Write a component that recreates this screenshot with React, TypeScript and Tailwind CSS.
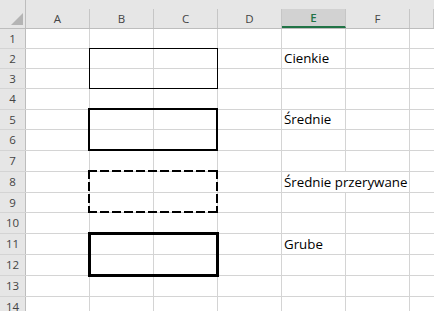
import type { ReactNode } from 'react'

const COLS = ['A', 'B', 'C', 'D', 'E', 'F', '']

// Row heights in px, bottom gridline included (the sheet is zoomed slightly, so they vary 20/21).
const ROWS: { h: string; label?: string }[] = [
  { h: 'h-[20px]' },
  { h: 'h-[20px]', label: 'Cienkie' },
  { h: 'h-[20px]' },
  { h: 'h-[21px]' },
  { h: 'h-[20px]', label: 'Średnie' },
  { h: 'h-[21px]' },
  { h: 'h-[21px]' },
  { h: 'h-[21px]', label: 'Średnie przerywane' },
  { h: 'h-[20px]' },
  { h: 'h-[21px]' },
  { h: 'h-[21px]', label: 'Grube' },
  { h: 'h-[21px]' },
  { h: 'h-[21px]' },
  { h: 'h-[21px]' },
]

const font = 'font-["Open_Sans",sans-serif]'

function ColHeader({ name, active }: { name: string; active?: boolean }) {
  return (
    <div className="h-[29px] flex-none border-b border-[#bdbdbd] bg-[#e6e6e6] pt-[9px]">
      <div
        className={`flex h-[19px] items-center justify-center border-r border-[#c6c6c6] text-[11.5px] ${
          active ? 'border-b-2 border-b-[#217346] bg-[#d2d2d2] font-semibold text-[#217346]' : 'text-[#444]'
        }`}
      >
        {name}
      </div>
    </div>
  )
}

function Cell({ children, wide }: { children?: ReactNode; wide?: boolean }) {
  return (
    <div
      className={`flex h-full flex-none items-end whitespace-nowrap border-r border-[#d4d4d4] pb-[1px] pl-[2px] text-[13.3px] leading-[18px] text-black ${
        wide ? 'w-[128px]' : 'w-[64px]'
      }`}
    >
      {children}
    </div>
  )
}

export default function App() {
  return (
    <div className={`relative h-[311px] w-[434px] overflow-hidden bg-white ${font}`}>
      {/* header row */}
      <div className="flex">
        <div className="flex h-[29px] w-[26px] flex-none items-start border-r border-b border-[#bdbdbd] bg-[#e6e6e6]">
          <svg width="25" height="28" className="block">
            <polygon points="23,13 23,25 11,25" fill="#b4b4b4" />
          </svg>
        </div>
        {COLS.map((c, i) => (
          <div key={i} className={i === COLS.length - 1 ? 'flex-1' : 'w-[64px] flex-none'}>
            <ColHeader name={c} active={c === 'E'} />
          </div>
        ))}
      </div>

      {/* sheet body */}
      {ROWS.map((r, i) => (
        <div key={i} className={`flex border-b border-[#d4d4d4] ${r.h}`}>
          <div className="flex h-full w-[26px] flex-none items-center justify-center border-r border-[#bdbdbd] bg-[#e6e6e6] text-[11.5px] text-[#444]">
            {i + 1}
          </div>
          <Cell />
          <Cell />
          <Cell />
          <Cell />
          {r.label === 'Średnie przerywane' ? (
            <Cell wide>{r.label}</Cell>
          ) : (
            <>
              <Cell>{r.label}</Cell>
              <Cell />
            </>
          )}
          <div className="flex-1" />
        </div>
      ))}

      {/* cell borders drawn on top of the gridlines */}
      <div className="pointer-events-none absolute inset-0 grid grid-cols-[26px_repeat(6,64px)_1fr] grid-rows-[29px_20px_20px_20px_21px_20px_21px_21px_21px_20px_21px_21px_21px_21px_21px]">
        <div className="col-start-3 col-span-2 row-start-3 row-span-2 -ml-[1px] -mt-[1px] border border-black" />
        <div className="col-start-3 col-span-2 row-start-6 row-span-2 -ml-[2px] -mt-[2px] border-2 border-black" />
        <div className="col-start-3 col-span-2 row-start-9 row-span-2 -ml-[2px] -mt-[2px]">
          <svg width="130" height="43" className="block">
            <g stroke="#000" strokeWidth="2" strokeDasharray="9 3" fill="none">
              <line x1="0" y1="1" x2="130" y2="1" />
              <line x1="0" y1="42" x2="130" y2="42" />
              <line x1="1" y1="0" x2="1" y2="43" />
              <line x1="129" y1="0" x2="129" y2="43" />
            </g>
          </svg>
        </div>
        <div className="col-start-3 col-span-2 row-start-12 row-span-2 -mb-[1px] -ml-[2px] -mr-[1px] -mt-[2px] border-[3px] border-black" />
      </div>
    </div>
  )
}
